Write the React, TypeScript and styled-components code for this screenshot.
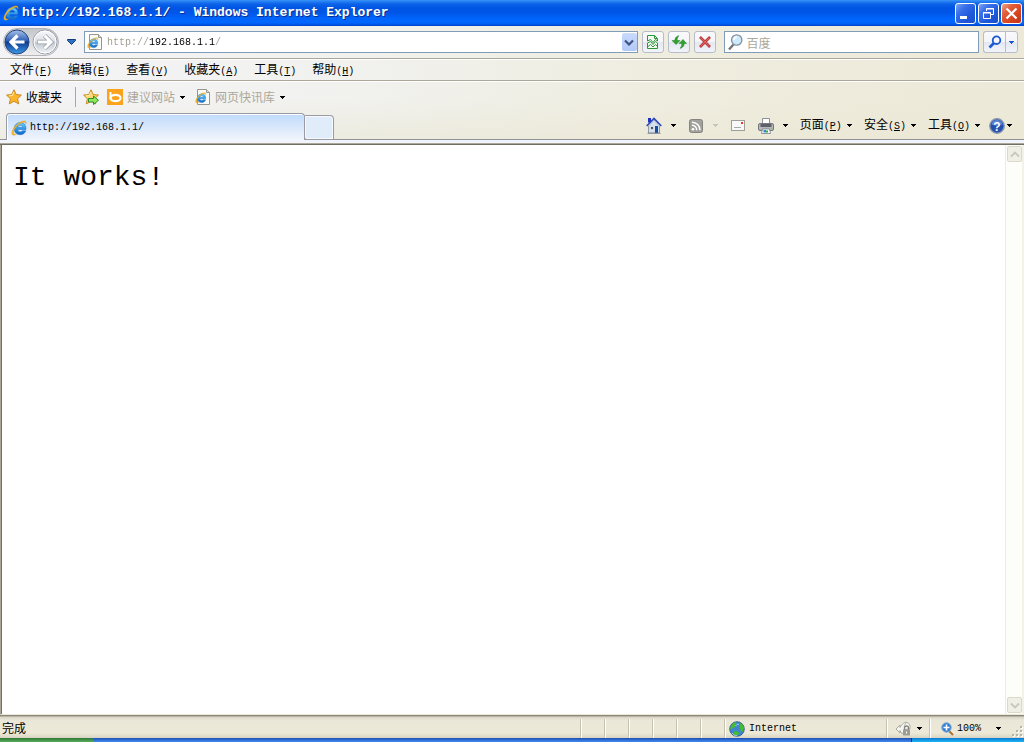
import React from "react";
import styled, { createGlobalStyle, css } from "styled-components";

const cjk = `"Noto Sans CJK SC", sans-serif`;
const mono = `"Liberation Mono", "Noto Sans CJK SC", monospace`;

const GlobalStyle = createGlobalStyle`
  * { box-sizing: border-box; }
  body { margin: 0; font-family: ${cjk}; font-size: 12px; line-height: 16px; color: #000; }
  button, input { font: inherit; color: inherit; margin: 0; }
  svg { display: block; flex: none; }
`;

const Window = styled.div`
  display: flex;
  flex-direction: column;
  min-height: 100vh;
  background: #ece9d8;
`;

/* ---------- title bar ---------- */

const TitleBar = styled.header`
  display: flex;
  align-items: center;
  gap: 3px;
  height: 26px;
  padding: 0 2px 0 3px;
  background: linear-gradient(
    to bottom,
    #3b92f8 0, #2a86f5 1px, #0c62e8 4px, #0054e3 8px, #0056e8 13px,
    #0064fb 18px, #0068ff 22px, #005cf0 24px, #0042c8 26px
  );
`;

const Title = styled.h1`
  flex: 1;
  margin: 0;
  font: bold 13px/18px ${mono};
  color: #fff;
  text-shadow: 1px 1px 0 #0a2f92;
  white-space: nowrap;
`;

const WindowButtons = styled.div`
  display: flex;
  gap: 2px;
`;

const WindowButton = styled.button<{ $close?: boolean }>`
  width: 21px;
  height: 21px;
  padding: 0;
  border: 1px solid #fff;
  border-radius: 3px;
  background: ${(p) =>
    p.$close
      ? "linear-gradient(135deg, #f0a48c 0, #e2603c 30%, #d8431c 65%, #b8361a 100%)"
      : "linear-gradient(135deg, #7aa5f4 0, #3a70ea 30%, #2058dc 65%, #1a4fc8 100%)"};
`;

/* ---------- address row ---------- */

const barBackground = css`
  background: linear-gradient(to right, #f4f4f7 0, #f1f1ee 35%, #efeddf 65%, #ece9d8 100%);
`;

const AddressRow = styled.div`
  ${barBackground}
  display: flex;
  align-items: center;
  height: 33px;
  padding: 0 6px 0 3px;
  border-bottom: 1px solid #aca899;
`;

const PlainButton = styled.button`
  display: flex;
  align-items: center;
  padding: 0;
  border: 0;
  background: none;
  white-space: nowrap;
`;

const NavButtons = styled.div`
  display: flex;
  justify-content: space-between;
  width: 56px;
  height: 28px;
  align-items: center;
  border: 1px solid #b4b6ba;
  border-radius: 14px;
  background: linear-gradient(#c4c6ca, #eeeef0);
`;

const NavButton = styled(PlainButton)`
  width: 26px;
  justify-content: center;
`;

const HistoryButton = styled(PlainButton)`
  width: 25px;
  justify-content: center;
  padding-right: 8px;
  padding-left: 8px;
`;

const Field = styled.div<{ $grow: number }>`
  display: flex;
  align-items: center;
  flex: ${(p) => p.$grow} 1 0;
  min-width: 0;
  height: 22px;
  border: 1px solid #7f9db9;
  background: #fff;
`;

const AddressField = styled(Field)`
  padding: 0 0 0 2px;
`;

const AddressInput = styled.input`
  flex: 1;
  min-width: 0;
  height: 20px;
  padding: 1px 0 0;
  margin-left: 4px;
  border: 0;
  outline: 0;
  font: 10px/18px ${mono};
  background: linear-gradient(to right, #9c9a8c 42px, #000 42px, #000 108px, #9c9a8c 108px);
  background-clip: text;
  -webkit-background-clip: text;
  color: transparent;
`;

const DropButton = styled(PlainButton)`
  width: 15px;
  height: 18px;
  justify-content: center;
  border-radius: 2px;
  background: linear-gradient(#c9dafc, #b2c9f7);
`;

const ToolButtons = styled.div`
  display: flex;
  gap: 4px;
  margin: 0 8px 0 4px;
`;

const ToolButton = styled(PlainButton)<{ $width?: number }>`
  width: ${(p) => p.$width ?? 22}px;
  height: 22px;
  justify-content: center;
  border: 1px solid #b9bcc9;
  border-radius: 3px;
  background: linear-gradient(#fafafc 0, #f4f5f9 50%, #e4e7f1 51%, #f2f4fa 100%);
`;

const SearchField = styled(Field)`
  padding-left: 2px;
`;

const SearchInput = styled.input`
  flex: 1;
  min-width: 0;
  height: 18px;
  margin-left: 3px;
  padding: 0;
  border: 0;
  outline: 0;
  line-height: 16px;
  background: none;
  &::placeholder { color: #aca899; opacity: 1; }
`;

const SplitButtons = styled.div`
  display: flex;
  margin-left: 4px;
  ${ToolButton}:first-child { border-radius: 3px 0 0 3px; border-right: 0; }
  ${ToolButton}:last-child { border-radius: 0 3px 3px 0; }
`;

/* ---------- menu and favourites ---------- */

const MenuRow = styled.nav`
  ${barBackground}
  display: flex;
  align-items: center;
  gap: 16px;
  height: 22px;
  padding: 1px 10px 0;
  border-top: 1px solid #fff;
  border-bottom: 1px solid #aca899;
`;

const Key = styled.span`
  font: 10px/16px ${mono};
`;

const LowerBars = styled.div`
  border-top: 1px solid #fff;
  background: linear-gradient(to bottom, rgba(236, 233, 216, 0) 30%, rgba(234, 231, 212, 0.6) 100%),
    linear-gradient(to right, #f4f4f7 0, #f1f1ee 35%, #efeddf 65%, #ece9d8 100%);
`;

const FavoritesRow = styled.div`
  display: flex;
  align-items: center;
  height: 31px;
  padding: 0 6px 1px;
`;

const FavoriteButton = styled(PlainButton)<{ $dim?: boolean }>`
  gap: 4px;
  color: ${(p) => (p.$dim ? "#aca899" : "#000")};
`;

const FavoriteLinks = styled.div`
  display: flex;
  align-items: center;
  gap: 8px;
  margin-left: 13px;
  padding-left: 7px;
  border-left: 1px solid #aca899;
  height: 20px;
`;

const FavoriteLink = styled(FavoriteButton)`
  padding-right: 2px;
  > svg:last-child { margin-left: 1px; }
`;

/* ---------- tabs and command bar ---------- */

const TabRow = styled.div`
  display: flex;
  align-items: flex-end;
  height: 27px;
  padding-left: 6px;
  border-bottom: 1px solid #919299;
`;

const Tab = styled.button`
  display: flex;
  align-items: center;
  gap: 3px;
  width: 299px;
  height: 27px;
  margin-bottom: -1px;
  padding: 1px 4px 0;
  border: 1px solid #9a9ba2;
  border-bottom: 0;
  border-radius: 4px 4px 0 0;
  background: linear-gradient(#bfdbfc 0, #d6e6fb 45%, #f1f5fc 100%);
  box-shadow: inset 0 1px 0 #fff, inset 1px 0 0 #fff;
  font: 10px/16px ${mono};
`;

const NewTab = styled.button`
  width: 29px;
  height: 25px;
  margin-bottom: -1px;
  padding: 0;
  border: 1px solid #9a9ba2;
  border-left: 0;
  border-radius: 0 4px 0 3px;
  background: #e1ecfa;
  box-shadow: inset 0 0 0 1px #f6f9fe;
`;

const CommandBar = styled.div`
  display: flex;
  align-items: center;
  gap: 12px;
  height: 27px;
  margin-left: auto;
  padding-right: 12px;
`;

const Command = styled(PlainButton)<{ $gap?: number }>`
  gap: ${(p) => p.$gap ?? 5}px;
`;

const HelpCommand = styled(Command)`
  margin-left: -3px;
`;

const TabEdge = styled.div`
  height: 5px;
  border-bottom: 1px solid #716f64;
  background: linear-gradient(#f1f4fc 0, #f1f4fc 3px, #aca899 3px);
`;

/* ---------- page ---------- */

const Viewport = styled.div`
  display: flex;
  flex: 1;
  border-left: 1px solid #aca899;
  border-right: 2px solid #f4f2e8;
  border-bottom: 1px solid #ece9d8;
  background: #fff;
`;

const Page = styled.main`
  flex: 1;
  padding: 17px 11px;
  border-left: 1px solid #716f64;
`;

const PageHeading = styled.h2`
  margin: 0;
  font: 28px/32px ${mono};
`;

const ScrollTrack = styled.div`
  display: flex;
  flex-direction: column;
  justify-content: space-between;
  width: 17px;
  padding: 1px 0 1px 1px;
  border-left: 1px solid #eeede5;
  background: #fdfdfa;
`;

const ScrollButton = styled(PlainButton)`
  width: 15px;
  height: 16px;
  justify-content: center;
  border: 1px solid #dcd9ca;
  border-radius: 2px;
  background: #f0efe6;
`;

/* ---------- status bar ---------- */

const StatusBar = styled.footer`
  display: flex;
  align-items: stretch;
  height: 23px;
  border-top: 1px solid #8c897c;
  background: linear-gradient(#d2cfc0 0, #eae7d8 4px, #ece9d8 17px, #d9d5c2 22px);
  box-shadow: inset 0 1px 0 #b9b6a7;
`;

const StatusText = styled.div`
  flex: 1;
  padding: 4px 2px;
`;

const StatusCell = styled.div<{ $width: number }>`
  display: flex;
  align-items: center;
  width: ${(p) => p.$width}px;
  margin: 3px 0 0;
  padding-left: 4px;
  border-left: 1px solid #c5c2b2;
  box-shadow: inset 1px 0 0 #fff;
  font: 10px/16px ${mono};
`;

const Zone = styled.span`
  margin-left: 4px;
`;

const StatusButton = styled(PlainButton)<{ $gap: number }>`
  gap: ${(p) => p.$gap}px;
  padding-left: 4px;
`;

const ZoomButton = styled(PlainButton)`
  gap: 3px;
  padding-left: 7px;
  svg:last-child { margin-left: 12px; }
`;

const Grip = styled.div`
  display: flex;
  align-self: flex-end;
  margin-left: auto;
`;

const Taskbar = styled.div`
  display: flex;
  height: 4px;
  background: #2a66cc;
`;

const StartEdge = styled.div`
  width: 94px;
  border-radius: 0 4px 0 0;
  background: linear-gradient(#2b7a35, #5cab5c);
`;

const TaskEdge = styled.div`
  flex: 1;
  background: linear-gradient(#1f4fb5, #3f8cf3);
`;

const TrayEdge = styled.div`
  width: 113px;
  border-left: 1px solid #0a3a78;
  background: linear-gradient(#0d7ad2, #1cb4f4);
`;

/* ---------- drawings ---------- */

const Swirl = () => (
  <>
    <defs>
      <linearGradient id="swirl" x1="0" y1="0" x2="0" y2="1">
        <stop offset="0" stopColor="#6fd0fb" />
        <stop offset=".5" stopColor="#2f9ceb" />
        <stop offset="1" stopColor="#1264c4" />
      </linearGradient>
    </defs>
    <path
      d="M15 9.500H6.700c.3 1.500 1.200 2.300 2.600 2.300 1 0 1.700-.4 2.100-1.100h3.400c-.8 2.500-2.800 4-5.600 4-3.600 0-6-2.300-6-5.900 0-3.700 2.500-6.200 6.100-6.200 3.700 0 5.900 2.600 5.700 6.900zM6.700 7.300h5c-.2-1.300-1.100-2.100-2.400-2.100-1.300 0-2.300.8-2.600 2.100z"
      fill="url(#swirl)"
      stroke="#1a6cc6"
      strokeWidth=".5"
    />
    <path
      d="M5.300 14.200C2.500 16 .6 15.500 .9 12.500 1.400 7.700 8.500.8 13 .9c2 0 2.500 1.300 1.900 3.200.1-1.500-.6-2-2-1.900C8.500 2.500 2.700 8.600 2.500 12.300c0 1.700 1 2.100 2.800 1.900z"
      fill="#f5b92a"
      stroke="#d9951a"
      strokeWidth=".4"
    />
  </>
);

const IeIcon = () => (
  <svg width="16" height="16" viewBox="0 0 16 16"><Swirl /></svg>
);

const IePageIcon = () => (
  <svg width="16" height="16" viewBox="0 0 16 16">
    <path d="M2.500.5h9l3 3v12h-12z" fill="#fbfbf8" stroke="#97968c" />
    <path d="M11.500.5v3h3" fill="#ddd" stroke="#97968c" />
    <g transform="translate(0 3) scale(.72)"><Swirl /></g>
  </svg>
);

const Arrow = ({ color = "#000" }: { color?: string }) => (
  <svg width="5" height="3" viewBox="0 0 5 3" shapeRendering="crispEdges">
    <path d="M0 0h5v1H4v1H3v1H2V2H1V1H0z" fill={color} />
  </svg>
);

const Round = ({ back }: { back?: boolean }) => (
  <svg width="26" height="26" viewBox="0 0 26 26">
    <defs>
      <linearGradient id="navBlue" x1="0" y1="0" x2="0" y2="1">
        <stop offset="0" stopColor="#a9c3ea" />
        <stop offset=".45" stopColor="#2f5fb6" />
        <stop offset=".5" stopColor="#0f3a90" />
        <stop offset="1" stopColor="#3f9be8" />
      </linearGradient>
      <linearGradient id="navGrey" x1="0" y1="0" x2="0" y2="1">
        <stop offset="0" stopColor="#f8f9fb" />
        <stop offset=".48" stopColor="#dcdfe5" />
        <stop offset=".52" stopColor="#c3c8d1" />
        <stop offset="1" stopColor="#f2f4f7" />
      </linearGradient>
    </defs>
    <circle cx="13" cy="13" r="12" fill={back ? "url(#navBlue)" : "url(#navGrey)"} stroke={back ? "#27457f" : "#989da7"} />
    {!back && <circle cx="13" cy="13" r="11" fill="none" stroke="#fff" />}
    <path
      d={back ? "M20.500 13H8M13.500 6.500L7 13l6.500 6.500" : "M5.500 13H18M12.500 6.500L19 13l-6.500 6.500"}
      fill="none"
      stroke={back ? "#fff" : "#8f96a3"}
      strokeWidth={back ? 3.2 : 4.4}
    />
    {!back && <path d="M6 13h12M12.500 6.500L19 13l-6.500 6.500" fill="none" stroke="#fff" strokeWidth="3" />}
  </svg>
);

const Star = ({ add }: { add?: boolean }) => (
  <svg width="16" height="16" viewBox="0 0 16 16">
    <path
      d="M8 .8l2.200 4.700 5.200.6-3.800 3.600 1.100 5.200L8 12.300l-4.700 2.600 1.100-5.200L.6 6.100l5.200-.6z"
      fill={add ? "#fbd76c" : "#fbb62c"}
      stroke="#c98a24"
      strokeLinejoin="round"
    />
    <path d="M7.800 3L6.500 6.500l-3.500.4" fill="none" stroke="#fff0b0" />
    {add && <path d="M5.500 9.500h5V7l5 4.300-5 4.200V13h-5z" fill="#8fe660" stroke="#2a8f25" />}
  </svg>
);

const BingIcon = () => (
  <svg width="16" height="16" viewBox="0 0 16 16">
    <path d="M0 0h16v16H0z" fill="#fca31c" />
    <path d="M3.500 3v7" stroke="#fff" strokeWidth="2" />
    <ellipse cx="8.500" cy="9" rx="5" ry="3.200" fill="none" stroke="#fff" strokeWidth="2.200" />
  </svg>
);

const BrokenPageIcon = () => (
  <svg width="14" height="16" viewBox="0 0 14 16" fill="#f2fbf0" stroke="#2e963a">
    <path d="M1.500 7V1.500h7l3 3V7L9.500 5.500 7 8.500 4.500 5.500z" />
    <path d="M8.500 1.500v3h3" fill="none" />
    <path d="M1.500 9v5.500h10V9L9.500 7.500 7 10.500 4.500 7.500z" />
    <path d="M2 12.500l2.500-2 2.500 2.500 2.500-2.500 2 2" fill="none" />
  </svg>
);

const RefreshIcon = () => (
  <svg width="16" height="16" viewBox="0 0 16 16" fill="#2fa12c" stroke="#16801c" strokeWidth=".5">
    <path d="M8 1.700C6.300 2 4 3 3.800 6.500H1L5 10.500l4-4H6.200C6 4.500 6.700 3 8 1.700z" />
    <path d="M9 14.300c1.700-.3 4-1.300 4.200-4.800H15.500L12 5.500l-4 4h2.800c.2 2-.5 3.500-1.800 4.800z" />
  </svg>
);

const StopIcon = () => (
  <svg width="14" height="14" viewBox="0 0 14 14">
    <path d="M2 2l10 10M12 2L2 12" stroke="#a82c2c" strokeWidth="2.600" />
    <path d="M2.500 2.500l9 9M11.500 2.500l-9 9" stroke="#e0605c" strokeWidth="1.300" />
  </svg>
);

const GlassIcon = () => (
  <svg width="17" height="18" viewBox="0 0 17 18">
    <path d="M6.500 11.500L2 16.500" stroke="#75777c" strokeWidth="2.400" />
    <circle cx="9.700" cy="7" r="5.200" fill="#cdeafb" stroke="#8390a0" strokeWidth="1.300" />
    <path d="M7 7a3 3 0 0 1 3-3" fill="none" stroke="#fff" strokeWidth="1.400" />
  </svg>
);

const SearchIcon = () => (
  <svg width="14" height="14" viewBox="0 0 14 14" fill="none">
    <path d="M6 8L1.500 12.500" stroke="#1c58cf" strokeWidth="2.600" />
    <circle cx="8.500" cy="5.200" r="3.800" stroke="#1c58cf" strokeWidth="1.800" />
  </svg>
);

const HomeIcon = () => (
  <svg width="16" height="17" viewBox="0 0 16 17">
    <path d="M2.500 9L8 3l5.500 6v7h-11z" fill="#d5e0ec" stroke="#7a8797" strokeWidth=".8" />
    <path d="M2 1h3v4.500H2z" fill="#1b32c4" />
    <path d="M.7 9L8 1.500 15.300 9" fill="none" stroke="#2b46b8" strokeWidth="1.600" />
    <path d="M2 9.300l6-6.100 6 6.100" fill="none" stroke="#b5cdf3" strokeWidth=".7" />
    <path d="M9 9h3v7H9z" fill="#154f9f" />
    <path d="M4.500 9.500h3v3h-3z" fill="#44566c" stroke="#fff" strokeWidth=".6" />
    <path d="M1.500 16.300h13" stroke="#8b929b" />
  </svg>
);

const RssIcon = () => (
  <svg width="16" height="16" viewBox="0 0 16 16">
    <rect x="1.500" y="1.500" width="13" height="13" rx="2" fill="#a2a19b" stroke="#85847e" />
    <circle cx="5" cy="11.200" r="1.300" fill="#fff" />
    <path d="M4 7.300a4.700 4.700 0 0 1 4.700 5M4 4.200a8 8 0 0 1 8 8.100" fill="none" stroke="#fff" strokeWidth="1.500" />
  </svg>
);

const MailIcon = () => (
  <svg width="16" height="12" viewBox="0 0 16 12">
    <rect x="1.500" y=".5" width="13" height="10" fill="#f8f8f8" stroke="#9e9d98" />
    <path d="M11 2h2v2h-2z" fill="#e03a2b" />
    <path d="M4 7.500h7" stroke="#a8a8a8" />
  </svg>
);

const PrinterIcon = () => (
  <svg width="16" height="16" viewBox="0 0 16 16">
    <path d="M4.500.5h7V7h-7z" fill="#fff" stroke="#8c8f95" />
    <rect x=".5" y="5.500" width="15" height="7" rx="1.500" fill="#b4b6ba" stroke="#74777c" />
    <path d="M2.500 6h11v3h-11z" fill="#5d6167" />
    <path d="M4.500 11h7l1 4.500h-9z" fill="#fff" stroke="#777b80" strokeWidth=".8" />
    <path d="M5.500 12h2.500v2.500H5.500z" fill="#2b8bd8" />
    <path d="M8 12.500h2v2H8z" fill="#36a949" />
    <path d="M13 10h1.500v1H13z" fill="#5ae03c" />
  </svg>
);

const HelpIcon = () => (
  <svg width="16" height="16" viewBox="0 0 16 16">
    <circle cx="8" cy="8" r="7.200" fill="#2450ae" stroke="#8492ad" strokeWidth="1.400" />
    <path d="M2.500 6.500a5.600 5.600 0 0 1 11 0C10 8 6 8 2.500 6.500z" fill="#5b85d6" />
    <text x="8" y="12.500" textAnchor="middle" fontFamily="Liberation Sans" fontWeight="bold" fontSize="12" fill="#fff">?</text>
  </svg>
);

const GlobeIcon = () => (
  <svg width="16" height="16" viewBox="0 0 16 16">
    <circle cx="8" cy="8" r="7.300" fill="#3f86cf" stroke="#2c4f80" strokeWidth=".8" />
    <path d="M2.500 4C4 2 6 1 7.500 1.500L6.500 4l-1 2.500L3.500 7 2 9 1 7.500zM11 2l2.500 1.500L15 7l-1.500 4-2-1.500-.8-3zM5 10.500l3-.5 2.500 2.500-2.500 2.500-3-1z" fill="#46bb34" />
    <path d="M6.500 5c1.500-2 2.500-2 3.500-1.500M3 12c1.500 2 3 2.700 5 2.800" stroke="#a9d4fa" fill="none" />
  </svg>
);

const PrivacyIcon = () => (
  <svg width="17" height="15" viewBox="0 0 17 15">
    <path d="M1 8l4-4v2.500C7 3 9.500.8 12 1.500c2.500.8 3.300 3 3 6L9 9v3.500L6 12l-1-2.500V12z" fill="#f4f4f0" stroke="#a3a29a" strokeWidth=".9" />
    <path d="M9 6l2-4.500" stroke="#bdbcb4" />
    <path d="M9.500 9V7a2 2 0 0 1 4 0v2" fill="none" stroke="#85847e" strokeWidth="1.300" />
    <rect x="8" y="8.500" width="7" height="6" fill="#9d9c95" />
    <path d="M11.500 10.500v2" stroke="#fff" />
  </svg>
);

const ZoomIcon = () => (
  <svg width="13" height="14" viewBox="0 0 13 14">
    <path d="M8 9l4 4" stroke="#a9713a" strokeWidth="2" />
    <circle cx="5.500" cy="5.500" r="4.700" fill="#2f7fd6" stroke="#7fa5c9" />
    <path d="M5.500 2.500v6M2.500 5.500h6" stroke="#fff" strokeWidth="1.600" />
  </svg>
);

const GripIcon = () => (
  <svg width="13" height="13" viewBox="0 0 13 13" shapeRendering="crispEdges">
    {[[9, 1], [5, 5], [9, 5], [1, 9], [5, 9], [9, 9]].map(([x, y]) => (
      <g key={`${x}-${y}`}>
        <path d={`M${x + 1} ${y + 1}h2v2h-2z`} fill="#fff" />
        <path d={`M${x} ${y}h2v2h-2z`} fill="#b8b4a3" />
      </g>
    ))}
  </svg>
);

const Chevron = ({ up, color, bold }: { up?: boolean; color: string; bold?: boolean }) => (
  <svg width="10" height="7" viewBox="0 0 10 7">
    <path d={up ? "M1 5.500l4-4 4 4" : "M1 1.500l4 4 4-4"} fill="none" stroke={color} strokeWidth={bold ? 2.2 : 1.8} />
  </svg>
);

/* ---------- data ---------- */

const menus = [
  ["文件", "F"], ["编辑", "E"], ["查看", "V"], ["收藏夹", "A"], ["工具", "T"], ["帮助", "H"],
];

const commands = [["页面", "P"], ["安全", "S"], ["工具", "O"]];

const Label = ({ text, hotkey }: { text: string; hotkey: string }) => (
  <span>{text}<Key>(<u>{hotkey}</u>)</Key></span>
);

export default function App() {
  return (
    <>
      <GlobalStyle />
      <Window>
        <TitleBar>
          <IeIcon />
          <Title>http://192.168.1.1/ - Windows Internet Explorer</Title>
          <WindowButtons>
            <WindowButton aria-label="最小化">
              <svg width="19" height="19"><path d="M4 12h7v3H4z" fill="#fff" /></svg>
            </WindowButton>
            <WindowButton aria-label="还原">
              <svg width="19" height="19" fill="none" stroke="#fff">
                <path d="M7.500 7V4.500h7v6H12" /><path d="M7 5h8" />
                <path d="M4.500 8.500h7v6h-7zM4 9h8" />
              </svg>
            </WindowButton>
            <WindowButton $close aria-label="关闭">
              <svg width="19" height="19"><path d="M4.500 4.500l10 10M14.500 4.500l-10 10" stroke="#fff" strokeWidth="2.200" /></svg>
            </WindowButton>
          </WindowButtons>
        </TitleBar>

        <AddressRow>
          <NavButtons>
            <NavButton aria-label="后退"><Round back /></NavButton>
            <NavButton aria-label="前进"><Round /></NavButton>
          </NavButtons>
          <HistoryButton aria-label="最近的页面">
            <svg width="9" height="6" viewBox="0 0 9 6">
              <path d="M.5.5h8v1l-4 4-4-4z" fill="#2f74c4" stroke="#143c78" />
            </svg>
          </HistoryButton>
          <AddressField $grow={555}>
            <IePageIcon />
            <AddressInput aria-label="地址" defaultValue="http://192.168.1.1/" />
            <DropButton aria-label="显示地址列表"><Chevron bold color="#3f5486" /></DropButton>
          </AddressField>
          <ToolButtons>
            <ToolButton aria-label="兼容性视图"><BrokenPageIcon /></ToolButton>
            <ToolButton aria-label="刷新"><RefreshIcon /></ToolButton>
            <ToolButton aria-label="停止"><StopIcon /></ToolButton>
          </ToolButtons>
          <SearchField $grow={254}>
            <GlassIcon />
            <SearchInput aria-label="搜索" placeholder="百度" />
          </SearchField>
          <SplitButtons>
            <ToolButton aria-label="搜索"><SearchIcon /></ToolButton>
            <ToolButton $width={13} aria-label="搜索选项"><Arrow color="#1c58cf" /></ToolButton>
          </SplitButtons>
        </AddressRow>

        <MenuRow>
          {menus.map(([text, key]) => (
            <PlainButton key={key}><Label text={text} hotkey={key} /></PlainButton>
          ))}
        </MenuRow>

        <LowerBars>
          <FavoritesRow>
            <FavoriteButton><Star />收藏夹</FavoriteButton>
            <FavoriteLinks>
              <FavoriteButton aria-label="添加到收藏夹栏"><Star add /></FavoriteButton>
              <FavoriteLink $dim><BingIcon />建议网站<Arrow /></FavoriteLink>
              <FavoriteLink $dim><IePageIcon />网页快讯库<Arrow /></FavoriteLink>
            </FavoriteLinks>
          </FavoritesRow>
          <TabRow>
            <Tab><IeIcon />http://192.168.1.1/</Tab>
            <NewTab aria-label="新选项卡" />
            <CommandBar>
              <Command $gap={9} aria-label="主页"><HomeIcon /><Arrow /></Command>
              <Command $gap={9} aria-label="源"><RssIcon /><Arrow color="#c8c5b6" /></Command>
              <Command aria-label="阅读邮件"><MailIcon /></Command>
              <Command $gap={9} aria-label="打印"><PrinterIcon /><Arrow /></Command>
              {commands.map(([text, key]) => (
                <Command key={key}><Label text={text} hotkey={key} /><Arrow /></Command>
              ))}
              <HelpCommand $gap={2} aria-label="帮助"><HelpIcon /><Arrow /></HelpCommand>
            </CommandBar>
          </TabRow>
        </LowerBars>
        <TabEdge />

        <Viewport>
          <Page><PageHeading>It works!</PageHeading></Page>
          <ScrollTrack>
            <ScrollButton disabled aria-label="向上滚动"><Chevron up color="#c9c7ba" /></ScrollButton>
            <ScrollButton disabled aria-label="向下滚动"><Chevron color="#c9c7ba" /></ScrollButton>
          </ScrollTrack>
        </Viewport>

        <StatusBar>
          <StatusText>完成</StatusText>
          {[1, 2, 3, 4, 5, 6].map((n) => <StatusCell key={n} $width={24} />)}
          <StatusCell $width={162}><GlobeIcon /><Zone>Internet</Zone></StatusCell>
          <StatusCell $width={43}>
            <StatusButton $gap={5} aria-label="隐私"><PrivacyIcon /><Arrow /></StatusButton>
          </StatusCell>
          <StatusCell $width={95}>
            <ZoomButton aria-label="缩放"><ZoomIcon />100%<Arrow /></ZoomButton>
            <Grip><GripIcon /></Grip>
          </StatusCell>
        </StatusBar>
        <Taskbar><StartEdge /><TaskEdge /><TrayEdge /></Taskbar>
      </Window>
    </>
  );
}
